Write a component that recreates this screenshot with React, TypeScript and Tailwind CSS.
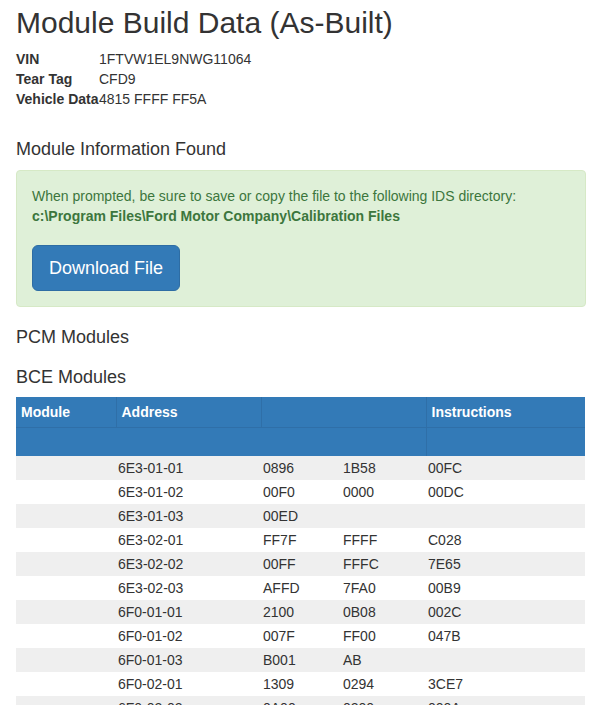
const INFO = [
  { label: "VIN", value: "1FTVW1EL9NWG11064" },
  { label: "Tear Tag", value: "CFD9" },
  { label: "Vehicle Data", value: "4815 FFFF FF5A" },
];

const ROWS: [string, string, string, string][] = [
  ["6E3-01-01", "0896", "1B58", "00FC"],
  ["6E3-01-02", "00F0", "0000", "00DC"],
  ["6E3-01-03", "00ED", "", ""],
  ["6E3-02-01", "FF7F", "FFFF", "C028"],
  ["6E3-02-02", "00FF", "FFFC", "7E65"],
  ["6E3-02-03", "AFFD", "7FA0", "00B9"],
  ["6F0-01-01", "2100", "0B08", "002C"],
  ["6F0-01-02", "007F", "FF00", "047B"],
  ["6F0-01-03", "B001", "AB", ""],
  ["6F0-02-01", "1309", "0294", "3CE7"],
  ["6F0-02-02", "0A00", "0200", "000A"],
];

export default function App() {
  return (
    <div className="min-h-screen bg-white px-4 text-[14px] leading-[20px] text-[#333] [font-family:'Liberation_Sans',Arial,sans-serif]">
      <div className="w-[570px]">
        <h1 className="pt-[6px] text-[30px] leading-[33px] font-normal">
          Module Build Data (As-Built)
        </h1>

        <dl className="mt-[10px] mb-[20px]">
          {INFO.map((row) => (
            <div key={row.label} className="flex">
              <dt className="w-[83px] shrink-0 whitespace-nowrap font-bold">{row.label}</dt>
              <dd>{row.value}</dd>
            </div>
          ))}
        </dl>

        <h4 className="mt-[30px] mb-[11px] text-[18px] leading-[20px]">Module Information Found</h4>

        <div className="mb-[20px] rounded-[4px] border border-[#d6e9c6] bg-[#dff0d8] p-[15px] text-[#3c763d]">
          <p>When prompted, be sure to save or copy the file to the following IDS directory:</p>
          <p className="font-bold">c:\Program Files\Ford Motor Company\Calibration Files</p>
          <button
            type="button"
            className="mt-[19px] h-[46px] rounded-[6px] border border-[#2e6da4] bg-[#337ab7] px-4 text-[18px] leading-[24px] text-white"
          >
            Download File
          </button>
        </div>

        <h4 className="mb-[10px] text-[18px] leading-[20px]">PCM Modules</h4>
        <h4 className="mt-[20px] mb-[10px] text-[18px] leading-[20px]">BCE Modules</h4>

        <table className="w-[569px] table-fixed border-collapse">
          <colgroup>
            <col className="w-[100px]" />
            <col className="w-[145px]" />
            <col className="w-[80px]" />
            <col className="w-[85px]" />
            <col />
          </colgroup>
          <thead className="bg-[#337ab7] text-white">
            <tr className="h-[30px]">
              <th className="border-r border-b border-[#2f6fa8] px-[5px] text-left font-bold">Module</th>
              <th className="border-r border-b border-[#2f6fa8] px-[5px] text-left font-bold">Address</th>
              <th colSpan={2} className="border-r border-b border-[#2f6fa8] px-[5px]" />
              <th className="border-b border-[#2f6fa8] px-[5px] text-left font-bold">Instructions</th>
            </tr>
            <tr className="h-[29px]">
              <th colSpan={4} className="border-r border-[#2f6fa8]" />
              <th />
            </tr>
          </thead>
          <tbody>
            {ROWS.map((row, i) => (
              <tr key={row[0]} className={i % 2 === 0 ? "h-[24px] bg-[#efefef]" : "h-[24px] bg-white"}>
                <td className="px-[2px]" />
                {row.map((cell, j) => (
                  <td key={j} className="px-[2px]">
                    {cell}
                  </td>
                ))}
              </tr>
            ))}
          </tbody>
        </table>
      </div>
    </div>
  );
}
